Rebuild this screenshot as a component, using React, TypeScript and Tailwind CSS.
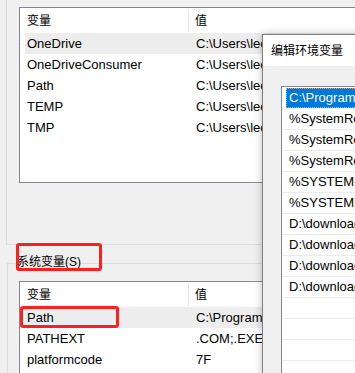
const userVars = [
  { name: "OneDrive", value: "C:\\Users\\leo\\OneDrive", active: true },
  { name: "OneDriveConsumer", value: "C:\\Users\\leo\\OneDrive" },
  { name: "Path", value: "C:\\Users\\leo\\AppData\\Local" },
  { name: "TEMP", value: "C:\\Users\\leo\\AppData\\Local\\Temp" },
  { name: "TMP", value: "C:\\Users\\leo\\AppData\\Local\\Temp" },
];

const systemVars = [
  { name: "Path", value: "C:\\Program Files\\Common Files", active: true },
  { name: "PATHEXT", value: ".COM;.EXE;.BAT;.CMD;.VBS" },
  { name: "platformcode", value: "7F" },
];

const pathItems = [
  "C:\\Program Files\\Common Files\\Oracle\\Java\\javapath",
  "%SystemRoot%\\system32",
  "%SystemRoot%",
  "%SystemRoot%\\System32\\Wbem",
  "%SYSTEMROOT%\\System32\\WindowsPowerShell\\v1.0\\",
  "%SYSTEMROOT%\\System32\\OpenSSH\\",
  "D:\\download\\nodejs\\",
  "D:\\download\\git\\cmd",
  "D:\\download\\python\\",
  "D:\\download\\python\\Scripts\\",
];

type Row = { name: string; value: string; active?: boolean };

const VarList = ({ rows, className }: { rows: Row[]; className: string }) => {
  return (
    <div className={`w-[340px] overflow-hidden border border-[#828790] bg-white ${className}`}>
      {/* header */}
      <div className="ml-[5px] flex h-[25px] items-center">
        <div className="w-[163px] shrink-0 pl-[2px] text-[12px]">变量</div>
        <div className="h-[22px] w-px shrink-0 bg-[#e5e5e5]" />
        <div className="pl-[6px] text-[12px]">值</div>
      </div>
      {rows.map((r) => (
        <div
          key={r.name}
          className={`ml-[5px] flex h-[21px] items-center whitespace-nowrap ${
            r.active ? "bg-[#ededed]" : ""
          }`}>
          <div className="w-[163px] shrink-0 pl-[2px]">{r.name}</div>
          <div className="pl-[8px]">{r.value}</div>
        </div>
      ))}
    </div>
  );
};

export default function App() {
  return (
    <div className="relative h-[373px] w-[355px] overflow-hidden bg-[#f0f0f0] font-['Liberation_Sans','Noto_Sans_CJK_SC',sans-serif] text-[13px] text-black">
      {/* user variables group */}
      <div className="ml-[6px] h-[245px] border-b border-l border-[#dcdcdc] pl-[12px] pt-[7px]">
        <VarList rows={userVars} className="h-[176px]" />
      </div>

      {/* system variables group */}
      <div className="ml-[7px] mt-[18px] h-[200px] border-l border-t border-[#dcdcdc]">
        <div className="-mt-[9px] ml-[9px] h-[14px] text-[12px] leading-[14px]">
          系统变量(S)
        </div>
        <VarList rows={systemVars} className="ml-[11px] mt-[12px] h-[120px]" />
      </div>

      {/* edit dialog */}
      <div className="absolute left-[262px] top-[34px] h-[360px] w-[120px] overflow-hidden border border-[#7f7f7f] bg-[#f0f0f0] shadow-[0_0_8px_rgba(0,0,0,0.25)]">
        <div className="flex h-[31px] items-center bg-white pl-[8px] text-[12px]">
          编辑环境变量
        </div>
        <div className="pl-[18px] pt-[20px]">
          <div className="h-[320px] overflow-hidden border border-[#828790] bg-white pt-px">
            {Array.from({ length: 14 }).map((_, i) => (
              <div key={i} className="flex h-[21px] overflow-hidden whitespace-nowrap border-b border-[#ebebeb]">
                {i === 0 ? (
                  <div className="ml-[4px] flex flex-1 items-center border border-dotted border-[#f5a35a] bg-[#0078d7] pl-[2px] text-white">
                    {pathItems[i]}
                  </div>
                ) : (
                  <div className="flex items-center pl-[7px]">{pathItems[i] ?? ""}</div>
                )}
              </div>
            ))}
          </div>
        </div>
      </div>

      {/* red annotations */}
      <div className="absolute left-[16px] top-[243px] h-[28px] w-[86px] rounded-[3px] border-[3px] border-[#ff1f1f]" />
      <div className="absolute left-[20px] top-[306px] h-[22px] w-[99px] rounded-[3px] border-[3px] border-[#ff1f1f]" />
    </div>
  );
}
